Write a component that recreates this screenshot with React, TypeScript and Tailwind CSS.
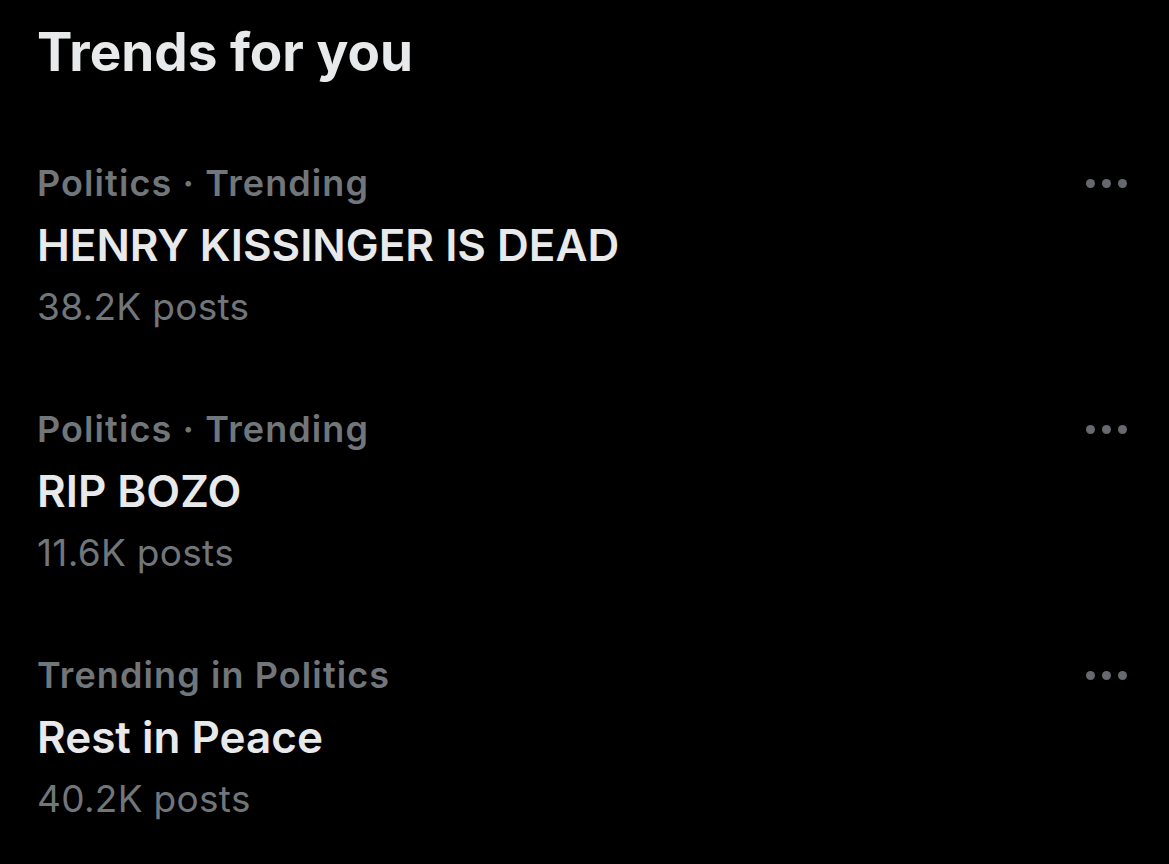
import { useState } from "react";

// Trends panel

interface Trend {
  id: string;
  context: string;
  name: string;
  posts: string;
}

const TRENDS: Trend[] = [
  { id: "1", context: "Politics · Trending", name: "HENRY KISSINGER IS DEAD", posts: "38.2K posts" },
  { id: "2", context: "Politics · Trending", name: "RIP BOZO", posts: "11.6K posts" },
  { id: "3", context: "Trending in Politics", name: "Rest in Peace", posts: "40.2K posts" },
];

function MoreDots() {
  return (
    <button className="flex items-center gap-[7px] h-[62px]" aria-label="More">
      <span className="w-[9px] h-[9px] rounded-full bg-[#66696d]" />
      <span className="w-[9px] h-[9px] rounded-full bg-[#66696d]" />
      <span className="w-[9px] h-[9px] rounded-full bg-[#66696d]" />
    </button>
  );
}

function TrendRow({ trend }: { trend: Trend }) {
  return (
    <div className="flex items-start justify-between">
      <div className="flex flex-col">
        <span className="text-[36px] leading-[62px] font-semibold text-[#71767b] tracking-[1.1px]">
          {trend.context}
        </span>
        <span className="text-[44px] leading-[62px] font-semibold text-[#e7e9ea]">
          {trend.name}
        </span>
        <span className="text-[37px] leading-[62px] font-normal text-[#71767b] tracking-[0.3px]">
          {trend.posts}
        </span>
      </div>
      <MoreDots />
    </div>
  );
}

export default function App() {
  const [trends] = useState(TRENDS);

  return (
    <div
      className="w-[1169px] h-[864px] bg-black pl-[37px] pr-[42px] pt-[21px] overflow-hidden"
      style={{ fontFamily: "Inter, 'Noto Sans', sans-serif" }}
    >
      <h1 className="text-[53px] leading-[62px] font-bold text-[#e7e9ea]">
        Trends for you
      </h1>
      <div className="mt-[69px] flex flex-col gap-[60px]">
        {trends.map((t) => (
          <TrendRow key={t.id} trend={t} />
        ))}
      </div>
    </div>
  );
}
